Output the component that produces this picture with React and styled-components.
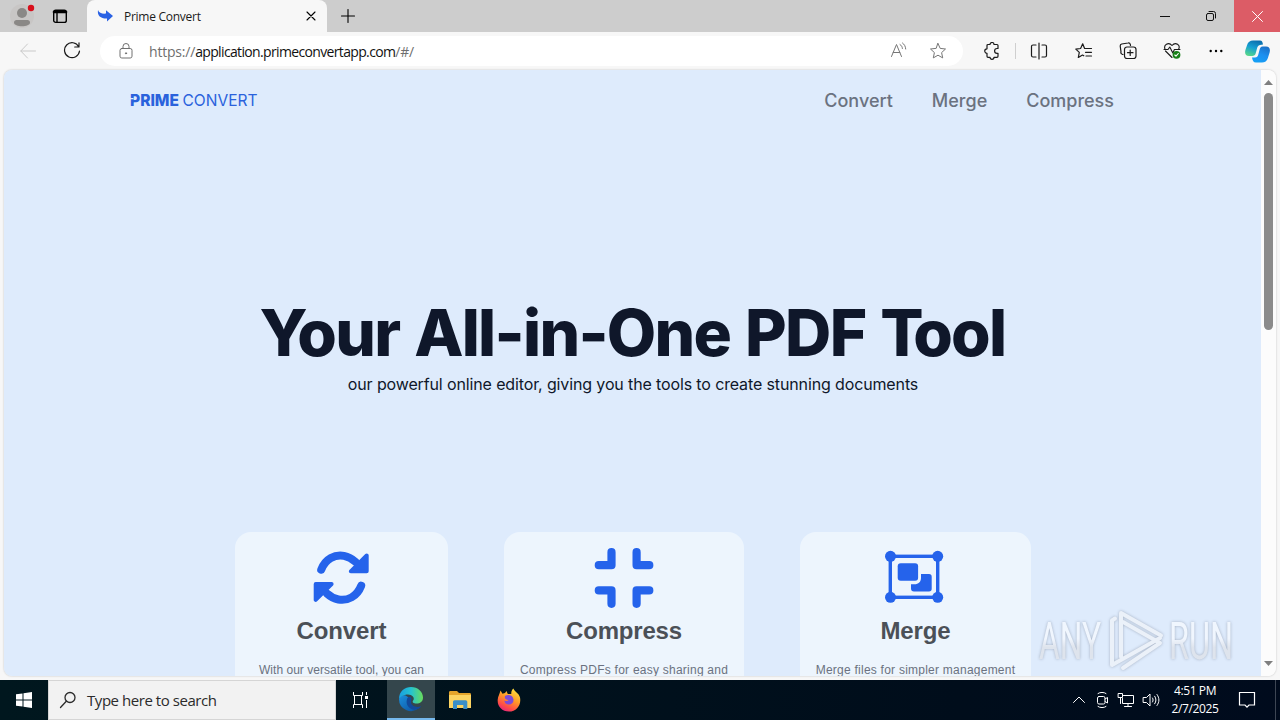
import React from 'react'
import styled, { createGlobalStyle } from 'styled-components'

const GlobalStyle = createGlobalStyle`
  * { box-sizing: border-box; }
  body {
    margin: 0;
    overflow: hidden;
    font-family: 'Open Sans', 'Noto Sans', sans-serif;
  }
`

const Line = ({ w = 20, h = w, sw = 1, children, ...rest }) => (
  <svg width={w} height={h} viewBox={`0 0 ${w} ${h}`} fill="none" stroke="currentColor"
    strokeWidth={sw} strokeLinecap="round" strokeLinejoin="round" {...rest}>
    {children}
  </svg>
)

const ConvertIcon = () => (
  <svg width="60" height="60" viewBox="1 0.3 60 60" fill="none" stroke="currentColor" strokeLinecap="round" strokeLinejoin="round">
    <path d="M10.200 22C14.500 11 24 6.500 33 8.200c4.500.8 8 2.800 11.500 6M50.200 38C45.900 49 36.400 53.500 27.400 51.800c-4.500-.8-8-2.800-11.500-6" strokeWidth="8" />
    <path d="M55.700 7.800v15.800H39.800zM4.700 52.200V36.400h15.900z" fill="currentColor" strokeWidth="4" />
  </svg>
)

const CompressIcon = () => (
  <svg width="60" height="60" viewBox="0 0 60 60" fill="none" stroke="currentColor" strokeWidth="8.200" strokeLinecap="round" strokeLinejoin="round">
    <path d="M17.500 4.200v13H4.800M42.600 4.200v13h12.700M17.500 55.800V42.400H4.800M42.600 55.800V42.400h12.700" />
  </svg>
)

const MergeIcon = () => (
  <svg width="62" height="60" viewBox="0 0 62 60" fill="currentColor">
    <rect x="5.300" y="8.300" width="47.400" height="41" fill="none" stroke="currentColor" strokeWidth="3.400" />
    <circle cx="5.500" cy="8.300" r="5.500" />
    <circle cx="52.700" cy="8.300" r="5.500" />
    <circle cx="5.500" cy="49.300" r="5.500" />
    <circle cx="52.700" cy="49.300" r="5.500" />
    <rect x="12.700" y="15.300" width="20.400" height="17.500" rx="3" />
    <path d="M36 26H44a2.700 2.700 0 0 1 2.700 2.700v12a2.700 2.700 0 0 1-2.700 2.700H29a3 3 0 0 1-3-3V36.300H29.500c4 0 6.500-2.500 6.500-6.300z" />
  </svg>
)

const features = [
  { title: 'Convert', text: 'With our versatile tool, you can', icon: ConvertIcon, width: 213, gap: 56, titleSpace: -0.1, space: 0.03 },
  { title: 'Compress', text: 'Compress PDFs for easy sharing and', icon: CompressIcon, width: 240, gap: 56, titleSpace: -0.2, space: 0.24 },
  { title: 'Merge', text: 'Merge files for simpler management', icon: MergeIcon, width: 231, gap: 0, titleSpace: -0.1, space: 0.24 },
]

const starPath = 'M9 1.500l2.200 4.900 5.300.6-3.900 3.600 1.100 5.300L9 13.200l-4.700 2.700 1.100-5.300L1.500 7l5.300-.6z'

function TitleBar() {
  return (
    <Titles>
      <Profile>
        <svg width="34" height="32" viewBox="0 0 34 32">
          <circle cx="17" cy="16" r="12" fill="#c8c6c5" />
          <circle cx="17" cy="13" r="5" fill="#8a8886" />
          <path d="M9 22.500c0-1.500 1-2.500 2.500-2.500h11c1.500 0 2.500 1 2.500 2.500 0 5-16 5-16 0z" fill="#8a8886" />
          <circle cx="26" cy="8" r="3.200" fill="#d80f1c" />
        </svg>
      </Profile>
      <Line w={16} sw={1.400}>
        <rect x="1.700" y="2.200" width="12.600" height="12.200" rx="2" />
        <path d="M2 4h12" strokeWidth="2.600" />
        <path d="M5 5v9" />
      </Line>
      <Tab>
        <svg width="17" height="14" viewBox="0 0 17 14">
          <path d="M1 1c1 3 4 4 8 3.600V1.300l7 5.700-6 5.400V9.500C4 9.700 0 7 1 1z" fill="#2a62e4" />
        </svg>
        <TabTitle>Prime Convert</TabTitle>
        <Line w={10} sw={1.100}><path d="M1 1l8 8M9 1l-8 8" /></Line>
      </Tab>
      <NewTab><Line w={14} sw={1.100}><path d="M7 .5v13M.5 7h13" /></Line></NewTab>
      <WindowButton><Line w={10}><path d="M0 5.500h10" /></Line></WindowButton>
      <WindowButton>
        <Line w={10}><rect x=".5" y="2.500" width="7" height="7" rx="1.500" /><path d="M3 .5h4.500a2 2 0 0 1 2 2V7" /></Line>
      </WindowButton>
      <WindowButton $close><Line w={11}><path d="M.5.5l10 10M10.500.5l-10 10" /></Line></WindowButton>
    </Titles>
  )
}

function ToolBar() {
  return (
    <Tools>
      <ToolSlot $w={44} $left={6} $color="#c9c9c9">
        <Line w={16}><path d="M15.500 8H.8M7.500 1L.8 8l6.700 7" /></Line>
      </ToolSlot>
      <ToolSlot $w={44}>
        <Line w={18} sw={1.200}><path d="M15.700 4.700A7.500 7.500 0 1 0 16.500 9M16 .8v4.200h-4.300" /></Line>
      </ToolSlot>
      <Address>
        <Line w={14} h={16} color="#707070">
          <rect x="1" y="5.500" width="12" height="9.500" rx="1.800" />
          <path d="M4 5.500V3.500a3 3 0 0 1 6 0v2" />
          <circle cx="7" cy="10.300" r=".6" fill="currentColor" />
        </Line>
        <Url><span>https://</span>application.primeconvertapp.com<span>/#/</span></Url>
        <Line w={18} color="#767676">
          <path d="M1.500 14.500L6.500 2.500l5 12M3.200 10.500h6.600M10 2.500c1.500 1 2.300 2.200 2.400 4M12.500 1c2 1.500 3 3.300 3.200 6" />
        </Line>
        <Star><Line w={18} color="#767676"><path d={starPath} /></Line></Star>
      </Address>
      <ToolSlot $w={57}>
        <Line w={18} sw={1.200}>
          <path d="M5 2.500h2a2 2 0 0 1 4 0h3a1 1 0 0 1 1 1v3h-1a2.300 2.300 0 0 0 0 4.800h1v3a1 1 0 0 1-1 1h-3a2 2 0 0 1-4 0H5a1 1 0 0 1-1-1v-3a2 2 0 0 1 0-4.500v-3.300a1 1 0 0 1 1-1z" />
        </Line>
      </ToolSlot>
      <Divider />
      <ToolSlot $w={46}>
        <Line w={18} sw={1.200}><path d="M6 3H3a1.500 1.500 0 0 0-1.500 1.500v9A1.500 1.500 0 0 0 3 15h3M12 3h3a1.500 1.500 0 0 1 1.500 1.500v9A1.500 1.500 0 0 1 15 15h-3M9 1v16" /></Line>
      </ToolSlot>
      <ToolSlot $w={44}>
        <Line w={18} sw={1.200}><path d="M11 6.500H9.600L7.700 1.800 5.600 6.500l-4.800.6 3.500 3.300-1 5.100L7.500 13l1.300.8M11 6.500h5.500M10.500 10.300h6M11 14h5.500" /></Line>
      </ToolSlot>
      <ToolSlot $w={44}>
        <Line w={18} sw={1.200}>
          <path d="M4 12.500l-.7-.2a2 2 0 0 1-1.300-2.500L1.200 4a2 2 0 0 1 1.500-2L9 1a2 2 0 0 1 2.300 1.400L11.500 3.500" />
          <rect x="5.500" y="5" width="11.500" height="11.500" rx="2.500" /><path d="M11.200 8v5.500M8.500 10.700H14" />
        </Line>
      </ToolSlot>
      <ToolSlot $w={44}>
        <Line w={18} sw={1.100}>
          <path d="M9 15.500L2.500 9M15.500 7.500C18 3 12.500-.5 9 3.500 5.500-.5 0 3 2.200 7.500M1 7.500h4l1.800-2.500 3 6 1.600-3.500H17" />
          <circle cx="13.500" cy="12.800" r="3.900" fill="#188018" stroke="none" />
          <path d="M11.800 13l1.200 1.200 2.300-2.700" stroke="#fff" />
        </Line>
      </ToolSlot>
      <ToolSlot $w={44}>
        <svg width="14" height="4" viewBox="0 0 14 4"><circle cx="1.700" cy="2" r="1.200" /><circle cx="7" cy="2" r="1.200" /><circle cx="12.300" cy="2" r="1.200" /></svg>
      </ToolSlot>
      <ToolSlot $w={39}><Copilot /></ToolSlot>
    </Tools>
  )
}

function Copilot() {
  return (
    <svg width="25" height="23" viewBox="0 0 25 23">
      <defs>
        <linearGradient id="cpLeft" x1=".6" y1="0" x2=".2" y2="1">
          <stop offset="0" stopColor="#0b6fae" /><stop offset=".45" stopColor="#159fd3" /><stop offset="1" stopColor="#59d987" />
        </linearGradient>
        <linearGradient id="cpRight" x1=".8" y1="0" x2=".3" y2="1">
          <stop offset="0" stopColor="#1b6fc4" /><stop offset=".5" stopColor="#1c8ff0" /><stop offset="1" stopColor="#16a0f5" />
        </linearGradient>
      </defs>
      <path d="M8 .5h7c2 0 2.500 1.500 3 4l-3 .6c-2 .4-2.500 1.700-3 3.400l-1.200 4.500c-.6 2.200-1.700 3-3.500 3H4c-3.500 0-4.500-2.500-3.600-6l1.700-5C3 2 5 .5 8 .5z" fill="url(#cpLeft)" />
      <path d="M17.500 6.500H21c3.500 0 4.500 2.500 3.600 6l-1.700 5.500c-1 3-3 4.500-6 4.500h-6c-2.500 0-3.200-1.500-3.900-5h3c2 0 2.800-1.300 3.300-3l1.200-4.500c.5-2.200 1.300-3.500 3-3.500z" fill="url(#cpRight)" />
    </svg>
  )
}

function Site() {
  return (
    <Viewport>
      <Page>
        <SiteHeader>
          <svg width="134" height="24" viewBox="0 0 134 24" fill="#2a62dc" fontFamily="Inter, sans-serif" fontSize="16.500">
            <text x="1" y="18" fontWeight="800" textLength="49" lengthAdjust="spacingAndGlyphs">PRIME</text>
            <text x="53.500" y="18" fontWeight="400" textLength="75" lengthAdjust="spacingAndGlyphs">CONVERT</text>
            <path d="M1 10h3.500v1.200H1z" fill="#deebfc" />
          </svg>
          <Nav>
            <a>Convert</a>
            <a>Merge</a>
            <a>Compress</a>
          </Nav>
        </SiteHeader>
        <Hero>
          <h1><Kern>Y</Kern>our All-in-One PDF <Kern>T</Kern>ool</h1>
          <p>our powerful online editor, giving you the tools to create stunning documents</p>
        </Hero>
        <Cards>
          {features.map(({ icon: Icon, ...f }) => (
            <Card key={f.title} $w={f.width} $gap={f.gap}>
              <CardIcon><Icon /></CardIcon>
              <CardTitle $space={f.titleSpace}>{f.title}</CardTitle>
              <CardText $space={f.space}>{f.text}</CardText>
            </Card>
          ))}
        </Cards>
      </Page>
      <ScrollBar>
        <svg width="9" height="5" viewBox="0 0 9 5"><path d="M4.500 0L9 5H0z" fill="#7f7f7f" /></svg>
        <Thumb />
        <svg width="9" height="5" viewBox="0 0 9 5"><path d="M4.500 5L9 0H0z" fill="#7f7f7f" /></svg>
      </ScrollBar>
      <Watermark>
        <svg width="224" height="66" viewBox="0 0 224 66" fontFamily="Roboto, sans-serif" fontSize="51">
          <defs>
            <linearGradient id="wm" x1="0" y1="0" x2="0" y2="1">
              <stop offset=".45" stopColor="#f4f8fe" /><stop offset=".6" stopColor="#dfe3ea" />
            </linearGradient>
          </defs>
          <g fill="url(#wm)">
            <text x="4" y="50" textLength="62" lengthAdjust="spacingAndGlyphs">ANY</text>
            <text x="134" y="50" textLength="64" lengthAdjust="spacingAndGlyphs">RUN</text>
          </g>
          <g fill="none" stroke="#eef2f8" strokeWidth="4" strokeLinejoin="round" strokeLinecap="round">
            <path d="M86 48V4l40 22.500" />
            <path d="M80 9.500l-3 2V56l48-27" />
            <path d="M88 13l37 21-37 25" />
          </g>
        </svg>
      </Watermark>
    </Viewport>
  )
}

function TaskBar() {
  return (
    <Tasks>
      <TaskButton>
        <svg width="16" height="16" viewBox="0 0 16 16" fill="#fff"><path d="M0 2.300L6.500 1.400v6.100H0zM7.500 1.200L16 0v7.500H7.500zM0 8.500h6.500v6.100L0 13.700zM7.500 8.500H16V16l-8.500-1.200z" /></svg>
      </TaskButton>
      <Search>
        <Line w={18} sw={1.300}><circle cx="11" cy="6.500" r="5" /><path d="M7.300 10.300L1.500 16.500" /></Line>
        <span>Type here to search</span>
      </Search>
      <TaskButton $w={51}>
        <TaskViewIcon />
      </TaskButton>
      <TaskButton $active>
        <svg width="26" height="26" viewBox="0 0 26 26">
          <defs>
            <linearGradient id="eTop" x1="0" y1=".5" x2="1" y2=".5"><stop offset="0" stopColor="#199ee0" /><stop offset=".5" stopColor="#25c3d0" /><stop offset="1" stopColor="#69dc5b" /></linearGradient>
            <linearGradient id="eLow" x1="0" y1="0" x2="1" y2="1"><stop offset="0" stopColor="#1b8fdc" /><stop offset="1" stopColor="#0c4f9e" /></linearGradient>
          </defs>
          <path d="M1 13a12 12 0 0 0 20 9c-8 2-12-3-9-8C9 8 3 8 1 13z" fill="url(#eLow)" />
          <path d="M1 13C1 5 7 1 13 1c7 0 12 5 12 10.500 0 4-3 6-6.500 6-3 0-4.500-1.200-3.500-2.700 2.500-3-1-6.300-5-6.300C5.500 8.500 2 11 1 13z" fill="url(#eTop)" />
          <path d="M9 13c-2 7 4 12 10 10.300 2-.6 3.600-2 4.200-3.300-4 2-9.700.5-10.200-3.500C12.800 14 14 13 13 11.500c-1-1-3.300-.5-4 1.500z" fill="#12499a" />
        </svg>
      </TaskButton>
      <TaskButton $w={49}>
        <svg width="22" height="20" viewBox="0 0 22 20">
          <path d="M0 2.500C0 1.500.5 1 1.500 1H8l2 2h10.500c1 0 1.500.5 1.500 1.500V18H0z" fill="#e5a52b" />
          <path d="M0 5h22v13H0z" fill="#fcd462" />
          <path d="M4 19v-7c0-1 .6-1.700 1.600-1.700h11c1 0 1.700.7 1.700 1.700v7h-4v-4H8v4z" fill="#3a8fc8" />
        </svg>
      </TaskButton>
      <TaskButton $w={49}>
        <svg width="24" height="24" viewBox="0 0 24 24">
          <defs>
            <linearGradient id="fx" x1=".8" y1="0" x2=".3" y2="1"><stop offset="0" stopColor="#ffe63e" /><stop offset=".45" stopColor="#ff9a27" /><stop offset=".8" stopColor="#ff4a48" /><stop offset="1" stopColor="#e4267c" /></linearGradient>
          </defs>
          <path d="M3.500 2.500l2 3.300L8 5l1.500-2 1.300 3h3.500C14 4 15 1.500 16.500.5c.5 3 5.500 4.500 6.500 9C24.500 17 19.500 23.500 12 23.500S-.2 17.500.8 11C1.100 8 2.500 6.500 3.500 2.500z" fill="url(#fx)" />
          <path d="M8 8c3-2 8-1 8.500 3.500.3 3.500-2.500 5.500-5.300 5-2.700-.5-4-2.500-3.700-4 1.500 1 3.500.5 4-.5-2-.5-4.500-1-3.500-4z" fill="#7c4bd8" />
        </svg>
      </TaskButton>
      <Tray>
        <Line w={14}><path d="M1.500 9.500l5.500-5.500 5.500 5.500" /></Line>
        <Line w={14} h={18}><rect x="2.500" y="5.500" width="7.500" height="7.500" rx="1.500" /><path d="M10 8l2.500-1.500v5.500L10 10.500M3 2.500c2-1.500 6-1.500 8 0M3 15.500c2 1.500 6 1.500 8 0" /></Line>
        <Line w={18} h={16}><path d="M6.500 3.500h10v8h-11v-5M11 11.500v3M7.500 14.500h7M1.500 1.500h4v4h-4zM3.500 5.500v6" /></Line>
        <Line w={18} h={16}><path d="M1.500 5.500h3l3.500-3.500v12l-3.500-3.500h-3zM10.500 6c.8 1.300.8 2.700 0 4M12.700 4.200c1.700 2.500 1.700 5.100 0 7.600M15 2.500c2.600 3.700 2.600 7.300 0 11" /></Line>
      </Tray>
      <Clock><span>4:51 PM</span><span>2/7/2025</span></Clock>
      <Notice>
        <Line w={18} sw={1.200}><path d="M1.500 1.500h15v12.500H11L9 16.200 7 14H1.500z" strokeLinejoin="miter" /></Line>
      </Notice>
      <Peek />
    </Tasks>
  )
}

const TaskViewIcon = () => (
  <svg width="22" height="18" viewBox="0 0 22 18" fill="none" stroke="#fff">
    <path d="M2.500 1v3.500h9V1M2.500 17v-3.500h9V17M3.500 4.500v9M10.500 4.500v9M15.500 1v3M15.500 9v8" />
    <path d="M14 6.500h3" strokeWidth="3" />
  </svg>
)

function App() {
  return (
    <>
      <GlobalStyle />
      <Screen>
        <TitleBar />
        <ToolBar />
        <Site />
        <TaskBar />
      </Screen>
    </>
  )
}

const Screen = styled.div`
  width: 1280px;
  height: 720px;
  display: flex;
  flex-direction: column;
  background: #f7f7f7;
  overflow: hidden;
`

const Titles = styled.div`
  height: 32px;
  display: flex;
  align-items: center;
  background: #cdcdcd;
  flex: none;
`

const Profile = styled.div`
  display: flex;
  padding-left: 5px;
  margin-right: 13px;
`

const Tab = styled.div`
  width: 240px;
  height: 32px;
  margin-left: 19px;
  padding: 0 11px 0 10px;
  display: flex;
  align-items: center;
  background: #f7f7f7;
  border-radius: 8px 8px 0 0;
`

const TabTitle = styled.span`
  flex: 1;
  margin-left: 10px;
  font-size: 12px;
  letter-spacing: -0.27px;
  color: #1b1b1b;
`

const NewTab = styled.div`
  display: flex;
  flex: 1;
  margin-left: 14px;
`

const WindowButton = styled.div`
  width: 46px;
  height: 32px;
  display: flex;
  align-items: center;
  justify-content: center;
  background: ${(p) => (p.$close ? '#dc5c66' : 'transparent')};
  color: ${(p) => (p.$close ? '#fff' : '#111')};
`

const Tools = styled.div`
  height: 38px;
  display: flex;
  align-items: center;
  flex: none;
`

const ToolSlot = styled.div`
  width: ${(p) => p.$w}px;
  margin-left: ${(p) => p.$left || 0}px;
  height: 36px;
  display: flex;
  align-items: center;
  justify-content: center;
  flex: none;
  color: ${(p) => p.$color || '#1b1b1b'};
`

const Address = styled.div`
  width: 863px;
  height: 30px;
  margin-left: 6px;
  padding: 0 16px 0 19px;
  display: flex;
  align-items: center;
  background: #fff;
  border-radius: 16px;
`

const Url = styled.div`
  flex: 1;
  margin-left: 16px;
  font-size: 14px;
  letter-spacing: -0.65px;
  color: #111;
  span {
    color: #6f6f6f;
    letter-spacing: -0.2px;
  }
`

const Star = styled.div`
  display: flex;
  margin-left: 21px;
`

const Divider = styled.div`
  width: 1px;
  height: 16px;
  margin-left: -5px;
  background: #cfcfcf;
`

const Viewport = styled.div`
  position: relative;
  height: 606px;
  margin: 0 4px 4px 4px;
  display: flex;
  border-radius: 8px;
  overflow: hidden;
  flex: none;
  box-shadow: 0 0 2px #bbb;
`

const Page = styled.div`
  width: 1257px;
  background: #deebfc;
  font-family: Inter, 'Liberation Sans', sans-serif;
`

const SiteHeader = styled.div`
  height: 60px;
  padding: 0 147px 0 124.5px;
  display: flex;
  align-items: center;
  justify-content: space-between;
`

const Nav = styled.div`
  display: flex;
  gap: 39px;
  font-size: 18px;
  font-weight: 500;
  color: #6b7280;
`

const Kern = styled.span`
  letter-spacing: -10.4px;
`

const Hero = styled.div`
  height: 402px;
  padding-top: 171px;
  text-align: center;
  color: #0f172a;
  h1 {
    margin: 0;
    font-size: 64px;
    line-height: 64px;
    font-weight: 800;
    letter-spacing: -1.7px;
    word-spacing: 2.5px;
  }
  p {
    margin: 7px 0 0;
    padding-left: 1px;
    font-size: 16px;
    line-height: 24px;
    letter-spacing: -0.13px;
  }
`

const Cards = styled.div`
  display: flex;
  padding-left: 231px;
`

const Card = styled.div`
  width: ${(p) => p.$w}px;
  height: 220px;
  margin-right: ${(p) => p.$gap}px;
  padding-top: 16px;
  display: flex;
  flex-direction: column;
  align-items: center;
  background: #edf5fd;
  border-radius: 16px;
  white-space: nowrap;
  font-family: 'Liberation Sans', Arial, sans-serif;
`

const CardIcon = styled.div`
  height: 60px;
  display: flex;
  color: #2563eb;
`

const CardTitle = styled.h2`
  margin: 7px 0 0;
  font-size: 24px;
  line-height: 32px;
  letter-spacing: ${(p) => p.$space}px;
  color: #4b5057;
`

const CardText = styled.p`
  margin: 15px 0 0;
  font-size: 12px;
  line-height: 16px;
  letter-spacing: ${(p) => p.$space}px;
  color: #6b7280;
`

const ScrollBar = styled.div`
  width: 15px;
  padding: 10px 0;
  display: flex;
  flex-direction: column;
  align-items: center;
  background: #fcfcfc;
`

const Thumb = styled.div`
  width: 9px;
  height: 237px;
  margin: 8px 0 auto;
  border-radius: 5px;
  background: #8b8b8b;
`

const Watermark = styled.div`
  position: absolute;
  right: 17px;
  bottom: 1px;
  filter: drop-shadow(0 0 1.5px rgba(110, 120, 140, 0.6));
  opacity: 0.85;
  svg {
    display: block;
  }
`

const Tasks = styled.div`
  height: 40px;
  display: flex;
  align-items: center;
  background: linear-gradient(90deg, #00171e, #000d1b 75%, #000b1d);
  flex: none;
`

const TaskButton = styled.div`
  width: ${(p) => p.$w || 48}px;
  height: 40px;
  display: flex;
  align-items: center;
  justify-content: center;
  background: ${(p) => (p.$active ? '#34464c' : 'transparent')};
  border-bottom: ${(p) => (p.$active ? '2px solid #76b9ed' : 'none')};
`

const Search = styled.div`
  width: 288px;
  height: 40px;
  padding-left: 10px;
  display: flex;
  align-items: center;
  gap: 10px;
  background: #f2f2f2;
  border: 1px solid #d5d5d5;
  color: #2b2b2b;
  font-size: 15px;
  letter-spacing: -0.45px;
`

const Tray = styled.div`
  margin-left: auto;
  display: flex;
  align-items: center;
  gap: 8px;
  color: #fff;
  svg:nth-child(2), svg:nth-child(3) {
    position: relative;
    left: 1px;
  }
`

const Clock = styled.div`
  width: 70px;
  display: flex;
  flex-direction: column;
  align-items: center;
  font-size: 12px;
  line-height: 18px;
  letter-spacing: -0.4px;
  color: #fff;
`

const Notice = styled.div`
  width: 45px;
  padding-left: 8px;
  display: flex;
  color: #fff;
`

const Peek = styled.div`
  width: 5px;
  height: 40px;
  border-left: 1px solid #3d4654;
`

export default App
